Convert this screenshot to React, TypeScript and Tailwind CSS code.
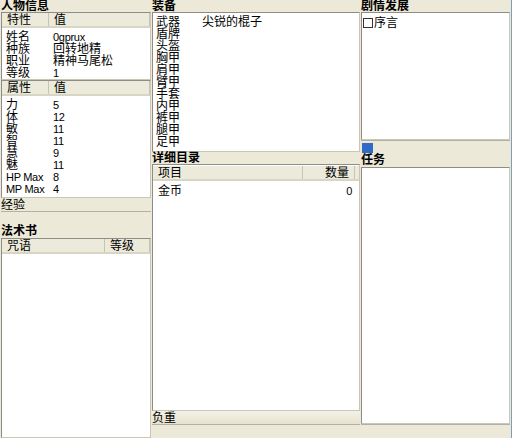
import React from "react";

const F = { fontFamily: '"Liberation Sans", "Noto Sans CJK SC", sans-serif' };

function isLatin(s: string) {
  return /^[\x00-\x7f]+$/.test(s);
}

function T({ s }: { s: string }) {
  if (isLatin(s)) return <span className="text-[11px] tracking-[-0.3px]">{s}</span>;
  return <span>{s}</span>;
}

function Title({ children }: { children: React.ReactNode }) {
  return (
    <div className="h-[12px] shrink-0 text-[12px] leading-[12px] font-bold text-black whitespace-nowrap">
      {children}
    </div>
  );
}

function Box({ className = "", children }: { className?: string; children?: React.ReactNode }) {
  return (
    <div
      className={
        "bg-white border border-t-[#8e8c86] border-l-[#8e8c86] border-r-[#c9c6b8] border-b-[#c9c6b8] flex flex-col " +
        className
      }
    >
      {children}
    </div>
  );
}

function Header({ cols }: { cols: { label: string; w: string; right?: boolean }[] }) {
  return (
    <div className="h-[15px] shrink-0 flex bg-[#ebeadb] border-b-2 border-[#d8d5c5] text-[12px] leading-[14px]">
      {cols.map((c, i) => (
        <div
          key={i}
          className={
            c.w +
            " h-full border-r border-[#c7c4b4] px-[5px] whitespace-nowrap flex items-center " +
            (c.right ? "justify-end" : "")
          }
        >
          {c.label}
        </div>
      ))}
    </div>
  );
}

function Bar({ children }: { children?: React.ReactNode }) {
  return (
    <div className="h-[14px] shrink-0 bg-[#ece9d8] border-t border-[#b4b1a3] flex items-center px-[1px]">
      {children}
    </div>
  );
}

function Rows({ rows }: { rows: [string, string][] }) {
  return (
    <div className="flex flex-col">
      {rows.map(([a, b], i) => (
        <div key={i} className="h-[12px] flex items-center text-[12px] leading-[12px] whitespace-nowrap">
          <div className="w-[51px] pl-[4px] shrink-0">
            <T s={a} />
          </div>
          <div>
            <T s={b} />
          </div>
        </div>
      ))}
    </div>
  );
}

export default function App() {
  const info: [string, string][] = [
    ["姓名", "0gprux"],
    ["种族", "回转地精"],
    ["职业", "精神马尾松"],
    ["等级", "1"],
  ];
  const attrs: [string, string][] = [
    ["力", "5"],
    ["体", "12"],
    ["敏", "11"],
    ["智", "11"],
    ["慧", "9"],
    ["魅", "11"],
    ["HP Max", "8"],
    ["MP Max", "4"],
  ];
  const equip = ["武器", "盾牌", "头盔", "胸甲", "肩甲", "臂甲", "手套", "内甲", "裤甲", "腿甲", "足甲"];

  return (
    <div style={F} className="w-[512px] h-[438px] bg-[#ece9d8] flex text-black overflow-hidden">
      {/* Left column */}
      <div className="w-[151px] shrink-0 flex flex-col pl-[1px]">
        <Title>人物信息</Title>
        <Box className="h-[68px] shrink-0">
          <Header cols={[{ label: "特性", w: "w-[47px]" }, { label: "值", w: "w-[101px]" }]} />
          <div className="pt-[3px]">
            <Rows rows={info} />
          </div>
        </Box>
        <Box className="h-[118px] shrink-0">
          <Header cols={[{ label: "属性", w: "w-[47px]" }, { label: "值", w: "w-[101px]" }]} />
          <div className="pt-[3px]">
            <Rows rows={attrs} />
          </div>
        </Box>
        <div className="h-[13px] shrink-0 text-[12px] leading-[13px] pt-[1px]">经验</div>
        <Bar />
        <Title>法术书</Title>
        <Box className="flex-1 mt-[1px]">
          <Header cols={[{ label: "咒语", w: "w-[103px]" }, { label: "等级", w: "w-[45px]" }]} />
        </Box>
      </div>

      {/* Middle column */}
      <div className="w-[209px] shrink-0 flex flex-col pl-[1px]">
        <Title>装备</Title>
        <Box className="h-[140px] shrink-0">
          <div className="flex flex-col pt-[3px]">
            {equip.map((e, i) => (
              <div key={i} className="h-[12px] flex items-center text-[12px] leading-[12px] whitespace-nowrap">
                <div className="w-[49px] pl-[3px] shrink-0">{e}</div>
                <div>{i === 0 ? "尖锐的棍子" : ""}</div>
              </div>
            ))}
          </div>
        </Box>
        <Title>详细目录</Title>
        <Box className="flex-1">
          <div className="mt-[1px]">
            <Header
              cols={[
                { label: "项目", w: "w-[150px]" },
                { label: "数量", w: "w-[52px]", right: true },
              ]}
            />
          </div>
          <div className="h-[12px] flex items-center text-[12px] leading-[12px] mt-[4px] whitespace-nowrap">
            <div className="w-[150px] pl-[5px]">金币</div>
            <div className="w-[51px] text-right pr-[2px]">
              <T s="0" />
            </div>
          </div>
        </Box>
        <div className="h-[13px] shrink-0 text-[12px] leading-[13px] pt-[1px] bg-gradient-to-b from-[#f4f2e8] to-[#e6e2d0]">
          负重
        </div>
        <Bar />
      </div>

      {/* Right column */}
      <div className="flex-1 flex flex-col pl-[1px] pr-[1px] border-r border-[#7f9db9]">
        <Title>剧情发展</Title>
        <Box className="h-[128px] shrink-0">
          <div className="flex items-center h-[12px] mt-[4px] pl-[1px] text-[12px] leading-[12px]">
            <span className="inline-block w-[10px] h-[10px] border border-[#333] mr-[1px]" />
            <span>序言</span>
          </div>
        </Box>
        <div className="h-[13px] shrink-0 bg-[#ece9d8] border-t border-[#b4b1a3] flex items-end pl-[1px]">
          <div className="w-[11px] h-[10px] bg-[#316ac5]" />
        </div>
        <div className="h-[14px] shrink-0 text-[12px] leading-[14px] font-bold">任务</div>
        <Box className="flex-1" />
        <Bar />
      </div>
    </div>
  );
}
